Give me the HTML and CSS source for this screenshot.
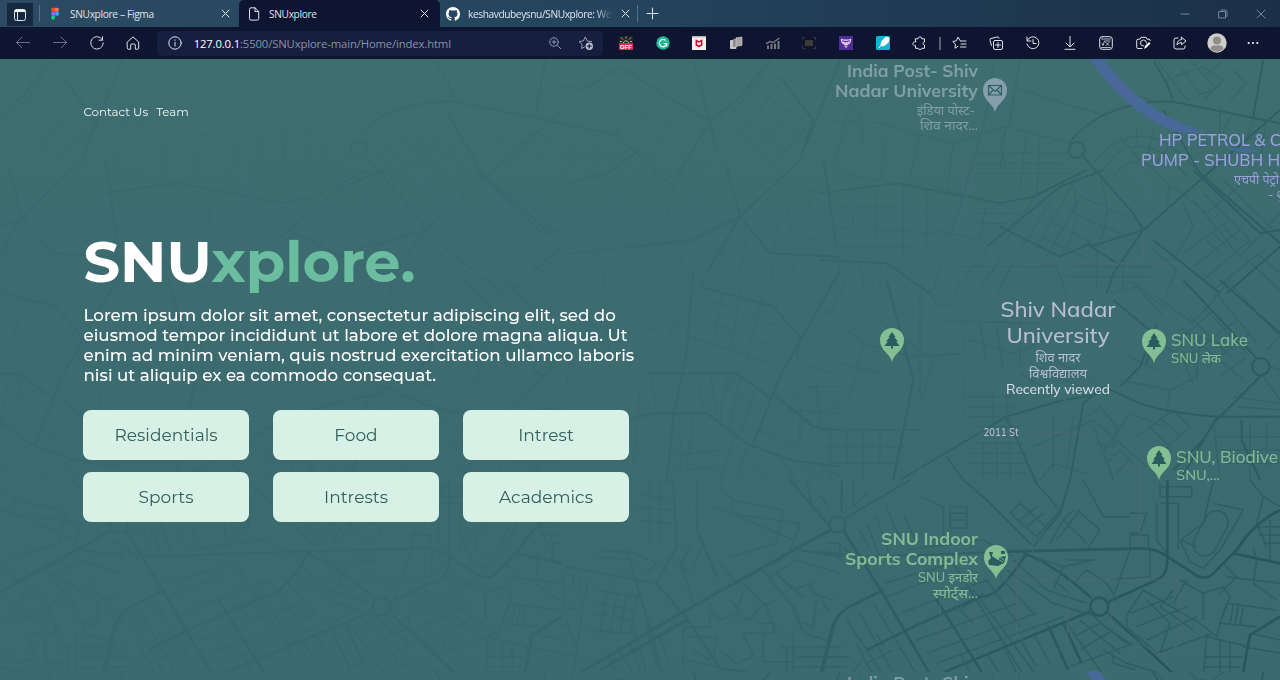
FILE: index.html
```html
<!DOCTYPE html>
<html lang="en">
<head>
<meta charset="utf-8">
<title>SNUxplore</title>
<link rel="stylesheet" href="styles.css">
</head>
<body>
<header class="browser">
  <div class="tabs">
    <div class="tab-menu"><svg width="14" height="14" viewBox="0 0 14 14"><rect x="1.500" y="1.500" width="11" height="11" rx="2" class="ln"/><path d="M1.500 4V3.500a2 2 0 0 1 2-2h7a2 2 0 0 1 2 2V4z" fill="#eef2f6"/><path d="M4.500 4v8.500" class="ln"/></svg></div>
    <i class="tab-sep"></i>
    <div class="tab tab-figma">
      <svg width="10" height="14" viewBox="0 0 10 14"><path d="M5 .8H3a2 2 0 0 0 0 4h2z" fill="#f24e1e"/><path d="M5 .8h2a2 2 0 0 1 0 4H5z" fill="#ff7262"/><path d="M5 4.800H3a2 2 0 0 0 0 4h2z" fill="#a259ff"/><circle cx="7" cy="6.800" r="2" fill="#1abcfe"/><path d="M5 8.800H3a2 2 0 1 0 2 2z" fill="#0acf83"/></svg>
      <span class="t1">SNUxplore – Figma</span>
      <svg class="x" width="9" height="9" viewBox="0 0 9 9"><path d="M1 1l7 7M8 1L1 8" class="ln"/></svg>
    </div>
    <div class="tab tab-active">
      <svg width="12" height="14" viewBox="0 0 12 14"><path d="M1.500 2.200A1.400 1.400 0 0 1 3 .8h4l3.700 3.700v7.200a1.400 1.400 0 0 1-1.400 1.400H3a1.400 1.400 0 0 1-1.500-1.400zM7 .8v3.700h3.700" class="ln"/></svg>
      <span class="t2">SNUxplore</span>
      <svg class="x" width="9" height="9" viewBox="0 0 9 9"><path d="M1 1l7 7M8 1L1 8" class="ln"/></svg>
    </div>
    <div class="tab tab-git">
      <svg width="14" height="14" viewBox="0 0 16 16"><path fill="#fff" d="M8 0C3.580 0 0 3.580 0 8c0 3.540 2.290 6.530 5.470 7.590.4.070.55-.17.55-.38 0-.19-.01-.82-.01-1.490-2.010.37-2.530-.49-2.690-.94-.09-.23-.48-.94-.82-1.130-.28-.15-.68-.52-.01-.53.63-.01 1.080.58 1.230.82.72 1.210 1.870.87 2.330.66.070-.52.28-.87.51-1.070-1.780-.2-3.640-.89-3.640-3.950 0-.87.31-1.590.82-2.150-.08-.2-.36-1.020.08-2.120 0 0 .67-.21 2.200.82.64-.18 1.320-.27 2-.27s1.360.09 2 .27c1.530-1.040 2.200-.82 2.200-.82.44 1.100.16 1.920.08 2.120.51.56.82 1.270.82 2.150 0 3.070-1.870 3.750-3.650 3.950.29.25.54.73.54 1.480 0 1.070-.01 1.930-.01 2.200 0 .21.15.46.55.38A8 8 0 0 0 16 8c0-4.420-3.580-8-8-8z"/></svg>
      <span class="t3">keshavdubeysnu/SNUxplore: Wel</span>
      <svg class="x" width="9" height="9" viewBox="0 0 9 9"><path d="M1 1l7 7M8 1L1 8" class="ln"/></svg>
    </div>
    <i class="tab-sep"></i>
    <svg class="plus" width="13" height="13" viewBox="0 0 13 13"><path d="M6.500 1v11M1 6.500h11" class="ln"/></svg>
    <div class="win">
      <svg width="10" height="10" viewBox="0 0 10 10"><path d="M1 5h8" class="ln"/></svg>
      <svg width="10" height="10" viewBox="0 0 10 10"><path d="M1 2.500h6.500V9H1zM3 1h4.500Q9 1 9 2.500V7.500" class="ln"/></svg>
      <svg width="10" height="10" viewBox="0 0 10 10"><path d="M1 1l8 8M9 1L1 9" class="ln"/></svg>
    </div>
  </div>
  <div class="bar">
    <span class="cell dim"><svg width="16" height="16" viewBox="0 0 16 16"><path d="M14.500 7.500H1.500M7 2L1.500 7.500 7 13" class="ln"/></svg></span>
    <span class="cell dim"><svg width="16" height="16" viewBox="0 0 16 16"><path d="M1.500 7.500h13M9 2l5.500 5.500L9 13" class="ln"/></svg></span>
    <span class="cell"><svg width="16" height="16" viewBox="0 0 16 16"><path d="M13.500 5A6.200 6.200 0 1 0 14.200 8M13.500 1.800v3.400h-3.400" class="ln"/></svg></span>
    <span class="cell"><svg width="16" height="16" viewBox="0 0 16 16"><path d="M2.300 7L8 1.900 13.700 7v6.200a1 1 0 0 1-1 1h-2.400V10a1 1 0 0 0-1-1H6.700a1 1 0 0 0-1 1v4.200H3.300a1 1 0 0 1-1-1z" class="ln"/></svg></span>
    <div class="address">
      <svg width="14" height="14" viewBox="0 0 14 14"><circle cx="7" cy="7" r="6.200" class="ln"/><path d="M7 6.300v3.700M7 3.900v.5" class="ln"/></svg>
      <span class="url"><b>127.0.0.1</b>:5500/SNUxplore-main/Home/index.html</span>
      <svg class="mag" width="14" height="14" viewBox="0 0 14 14"><circle cx="6" cy="6" r="4.300" class="ln"/><path d="M9.200 9.200l3.500 3.500M6 4v4M4 6h4" class="ln"/></svg>
      <svg class="fav" width="16" height="16" viewBox="0 0 16 16"><path d="M6.500 12L3.500 13.500l.7-4L1 6.500l4.300-.6L7.300 2l2 4 4.300.6" class="ln"/><circle cx="11.300" cy="11.200" r="3.700" fill="#b9bfcb"/><path d="M11.300 9v4.400M9.100 11.200h4.400" stroke="#161f40" stroke-width="1.200"/></svg>
    </div>
    <span class="cell"><svg width="14" height="14" viewBox="0 0 14 14"><path d="M0 0h14v8H0z" fill="#222329"/><path d="M7 .5v2M2 1.500l2 2M12 1.500l-2 2M1 5.500h2M11 5.500h2M4.200 7a2.900 2.900 0 0 1 5.600 0" stroke="#cfc6a0" stroke-width=".9" fill="none"/><path d="M0 7h14v7H0z" fill="#e32656"/><text x="7" y="12.700" class="off">OFF</text></svg></span>
    <span class="cell"><svg width="14" height="14" viewBox="0 0 14 14"><circle cx="7" cy="7" r="6.700" fill="#13bd91"/><path d="M9.600 4.400A3.700 3.700 0 1 0 10.700 7.600H7.800M10.700 7.300v3" stroke="#fff" stroke-width="1.200" fill="none"/></svg></span>
    <span class="cell"><svg width="14" height="14" viewBox="0 0 14 14"><rect width="14" height="14" fill="#f3efee"/><path d="M0 0h14v1.500H0z" fill="#b9b5b8"/><path d="M4.300 4.500V9L7 10.300 9.700 9V4.500L7 6z" stroke="#c8102e" stroke-width="1.500" fill="none"/></svg></span>
    <span class="cell"><svg width="14" height="14" viewBox="0 0 14 14"><rect x="1" y="4" width="6.500" height="9" rx="1" fill="#c6c6c6"/><path d="M4 3l4-.6v8L4 11z" fill="#8b8b8b"/><path d="M7 1.800l6-.8v8.500l-6 .8z" fill="#a6a6a6" stroke="#d0d0d0" stroke-width=".6"/></svg></span>
    <span class="cell"><svg width="14" height="14" viewBox="0 0 14 14"><path d="M2 9.500V13M5.500 8v5M9 7.500V13M12.500 5v8" stroke="#77797f" stroke-width="2"/><path d="M0 7.500l4-2 3 1 6.500-4.500" stroke="#77797f" stroke-width="1.500" fill="none"/></svg></span>
    <span class="cell"><svg width="14" height="14" viewBox="0 0 14 14"><path d="M3 4h8v6H3z" fill="#3c3a32"/><path d="M.5 4V1.500H3M11 1.500h2.500V4M.5 10v2.500H3M11 12.500h2.500V10" stroke="#34384a" fill="none"/></svg></span>
    <span class="cell"><svg width="14" height="14" viewBox="0 0 14 14"><rect width="14" height="14" fill="#512c97"/><path d="M2.500 3.500a4.500 5 0 0 0 9 0q-4.500 1.500-9 0zM4 6q3 2 6 0" stroke="#e4d8f4" stroke-width="1.300" fill="none"/><path d="M5 9.500h4L7 12.500z" fill="#d4a9a0"/></svg></span>
    <span class="cell"><svg width="14" height="14" viewBox="0 0 14 14"><rect width="14" height="14" rx="1.500" fill="#10b5d2"/><path d="M5 8l1-3 4-4 3 1-.5 4-4 3.500L6 10zM3 12l2.500-3.500" fill="#fff" stroke="#fff"/></svg></span>
    <span class="cell"><svg width="14" height="14" viewBox="0 0 14 14"><path d="M3.500 2.800H6a1.900 1.900 0 0 1 3.800 0h2.700V6a1.500 1.500 0 0 0 0 3v3.300H9.700a1.700 1.700 0 0 1-3.300 0H3.500V9.600a2 2 0 1 1 0-3.800z" class="ln"/></svg></span>
    <i class="bar-sep"></i>
    <span class="cell"><svg width="15" height="14" viewBox="0 0 15 14"><path d="M8 4.500L6 1 4.300 4.800.8 5.500l2.700 2.700-.5 4L6 10.300M8.500 5H14M9 8h5M8.500 11H14" class="ln"/></svg></span>
    <span class="cell"><svg width="15" height="15" viewBox="0 0 15 15"><rect x="4.500" y="4.500" width="9" height="9" rx="1.500" class="ln"/><path d="M2.500 9.500L1 4.500a1.500 1.500 0 0 1 1-2l6-1.500a1.500 1.500 0 0 1 2 1.200M9 6.500v5M6.500 9h5" class="ln"/></svg></span>
    <span class="cell"><svg width="14" height="14" viewBox="0 0 14 14"><path d="M1 1v4h4M1.300 4.500A6 6 0 1 1 1 8M7 3.500V7.500h3" class="ln"/></svg></span>
    <span class="cell"><svg width="14" height="14" viewBox="0 0 14 14"><path d="M7 .5v10M3 7l4 4 4-4M2 13.300h10" class="ln"/></svg></span>
    <span class="cell"><svg width="14" height="14" viewBox="0 0 14 14"><rect x=".7" y=".7" width="12.600" height="12.600" rx="2.500" class="ln"/><path d="M2.500 3h9M2.500 11.500h9M3 7.500l1 2L5.500 5h5.500M7 6.500l3 3M10 6.500l-3 3" class="ln thin"/></svg></span>
    <span class="cell"><svg width="15" height="14" viewBox="0 0 15 14"><path d="M6 12.500H2a1.300 1.300 0 0 1-1.300-1.300V4.500A1.300 1.300 0 0 1 2 3.200h2L5 1.300h5l1 1.900h2a1.300 1.300 0 0 1 1.300 1.300M7.500 10a3 3 0 1 1 3-3" class="ln"/><path d="M8 13l1-3 4-4 1.500 1.500-4 4z" fill="#fff"/></svg></span>
    <span class="cell"><svg width="14" height="14" viewBox="0 0 14 14"><path d="M5 2H3a2 2 0 0 0-2 2v7a2 2 0 0 0 2 2h7a2 2 0 0 0 2-2v-1M8.500 1.200L13 5 8.500 8.700V6.500Q5.500 6.500 4 9q0-5 4.500-5.500z" class="ln"/></svg></span>
    <span class="cell avatar"><svg width="20" height="20" viewBox="0 0 20 20"><circle cx="10" cy="10" r="9.700" fill="#d0cdcb"/><circle cx="10" cy="7.500" r="4" fill="#918d89"/><path d="M3.500 16Q4 12.500 7 12.500h6q3 0 3.500 3.500-6.500 5.500-13 0z" fill="#918d89"/></svg></span>
    <span class="cell"><svg width="12" height="4" viewBox="0 0 12 4"><circle cx="1.700" cy="2" r="1.100" fill="#eceff4"/><circle cx="6" cy="2" r="1.100" fill="#eceff4"/><circle cx="10.300" cy="2" r="1.100" fill="#eceff4"/></svg></span>
  </div>
</header>

<main class="page">
  <svg class="map" width="1280" height="621" viewBox="0 59 1280 621">
    <defs>
      <linearGradient id="fade" gradientUnits="userSpaceOnUse" x1="560" y1="330" x2="1180" y2="620">
        <stop offset="0" stop-color="#fff" stop-opacity=".17"/><stop offset=".4" stop-color="#fff" stop-opacity=".38"/><stop offset=".75" stop-color="#fff" stop-opacity=".72"/><stop offset="1" stop-color="#fff" stop-opacity=".92"/>
      </linearGradient>
      <mask id="m" maskUnits="userSpaceOnUse" x="0" y="59" width="1280" height="621"><rect y="59" width="1280" height="621" fill="url(#fade)"/></mask>
      <clipPath id="tileclip"><rect x="562" y="59" width="718" height="612.500"/></clipPath>
      <g id="pin"><path d="M0 17C-2 8-12 6-12-5A12 12 0 0 1 12-5C12 6 2 8 0 17z"/></g>
      <g id="tree"><use href="#pin" fill="#82bf93"/><path d="M0-13l3.500 5H2.200l3.800 4.500H4.200l3.300 4.500H1v2.500h-2V1h-6.500l3.300-4.500H-6L-2.200-8h-1.300z" fill="#285d60"/></g>
      <g id="tile" clip-path="url(#tileclip)">
        <g transform="translate(820 60) scale(.33333)">
          <path class="major" d="M1330 0L1300 170M850 165Q950 120 1060 125L1380 190M850 165Q770 210 750 250M790 290L940 460 970 510 1380 150M970 510L880 640 860 700M1030 150L1140 340 1380 550M800 330L640 410 540 430 230 370 0 400M810 560L970 510M800 550L890 610M500 560L720 380 850 330M1000 540L1200 700M540 500L720 590 810 550M1060 120L1040 70 1000 0M1120 330L1320 520 1380 510M1380 560L1220 700M0 600L200 610 330 700"/>
          <circle class="major" cx="770" cy="270" r="24"/>
          <path class="minor" d="M20 180L180 190 400 250 560 200 750 250M120 10L40 330M60 340L230 370M40 440H270M100 350V520M170 360V540M250 375V600M320 390V560M0 500L350 520M20 560H280M340 380L500 420 480 540 350 510M520 0L500 160 440 370 340 690M580 80L700 120 850 165M600 0L570 180 540 250 560 340M560 200L540 330M620 210L600 390M660 230L650 400M450 280H740M450 310H730M460 340H750M470 460H600M460 490H560M820 310Q890 220 980 230 1050 240 1130 330M850 330Q900 250 970 260 1040 270 1100 350M880 350Q920 290 980 310L1050 380 1040 430M900 230L960 300M950 200V260M1000 210L980 300M1060 240L1010 310M560 540L650 400M600 570L700 410M640 580L760 370M680 590L800 380M720 590Q790 500 760 370M840 360Q880 450 840 540M780 410L950 480M740 450L920 530M700 490L840 560M660 530L790 590M890 80L1010 130M1010 0L1100 120 1200 80M1040 60L1150 20 1210 60 1150 120M1080 20L1140 100M1110 0L1180 80M1210 0L1150 50M1240 30L1280 70 1230 120M1200 140V250M1240 150L1190 260M1300 170L1270 280M1340 180L1320 300M1380 230L1140 250M1060 380L1160 460 1290 350M1090 430L1120 500 1060 600M1120 420L1260 590 1380 460M1150 400L1300 550M1180 380L1330 530M1210 360L1360 510M1090 580L1230 480M1120 620L1260 510M1150 660L1290 540M1180 690L1330 570M1000 570L1070 630 1040 700M910 600V690M830 570V690M760 620H1000M740 650H990M700 600L740 700M1160 540L1200 580M1180 520L1220 560M1210 500L1250 540M1280 600L1380 690M1310 580L1380 640M40 120L120 160 130 260M200 210L180 370M300 220L270 350M400 250L380 400M60 610L40 700M120 600L130 690M180 610V690M500 570L400 700M540 600L470 700M580 610L530 700M420 620H700"/>
          <path class="pink" d="M510 170L430 440 350 640 330 700M430 300V690M370 610H1070M530 180L660 250 850 160M970 510V610M120 180L260 230M800 370L740 530M960 340L1000 430M650 280L560 300"/>
        </g>
        <g transform="translate(820 280) scale(.33333)">
          <path class="major" d="M1090 0L1310 235M1330 280L1180 430 1080 600M1380 160L1200 0M1380 410H1190Q1050 400 960 370L850 320M730 360L560 410 240 600M850 320L790 370 750 600M560 410L650 610M1010 130L960 260 900 320M380 530L430 600M1265 420V480L1320 600M1190 415L1150 480 1060 570M200 0L280 300 220 600M840 340L740 360M880 60L1000 160 980 250"/>
          <circle class="major" cx="1322" cy="260" r="26"/>
          <path class="minor" d="M0 80L130 190 280 230 430 220M80 0L30 100M130 190L90 350 0 400M180 120L340 240 300 370M50 250L190 280M0 450H300M30 450V600M80 450V560M130 450V600M180 450V550M0 500H260M20 550H240M300 30V350M340 20A30 30 0 1 0 400 60M430 20V430M340 120L650 130M450 180L580 220 700 170M480 130L500 250M530 140L550 270M600 120V260M430 350H580M440 380H580M450 410H560M470 440H600M520 330V440M560 320V430M600 280L700 340M630 250L780 320M660 220L820 300M460 490H610M450 520H620M450 550H620M470 580H620M490 490V600M530 490V600M570 490V600M640 500L820 420 980 560M700 400V570M760 410L740 560M820 440L880 600M790 420L840 380 890 440 880 500 830 490M900 300L1050 330 1130 290 1110 160M1130 300L1140 170 1250 210M1050 330L1040 400M1090 240L1120 310M930 230L1010 270M1020 190L1120 250M870 40L950 20 1030 110M930 0L1030 80M1010 50L1120 130 1230 0M1080 140L1270 300M1110 110L1240 240M1150 80L1280 220M1190 40L1310 190M1230 10L1380 170M1080 180L1180 90M1120 220L1250 120M1160 260L1290 160M1200 290L1280 230M1340 210L1380 170M1350 260L1380 270M1330 290L1380 360M1240 350L1380 370M1250 380L1380 390M1180 420L1200 600M1190 470H1380M1200 510H1380M1220 550H1380M1290 430V600M1340 430V560M950 470L1060 390 1110 440 1010 530M990 440L1050 500M1020 410L1080 470M840 530L930 400 1030 440M860 550L900 510 940 550M890 580L930 540M660 600L700 550 800 580"/>
          <path class="pink" d="M430 20V430H300V610M300 375H430M450 455L780 460Q870 550 960 560V610M320 0V120H650M430 270H740M880 0V40Q990 70 960 130L900 240M1000 390L960 460"/>
        </g>
        <g transform="translate(820 480) scale(.33333)">
          <path class="major2" d="M560 215L970 205Q1010 205 1050 235L1120 280Q1160 310 1190 270L1250 210Q1300 130 1380 90M1042 0V240Q1040 290 1010 300L865 365M610 220Q700 250 815 355M865 400L1080 600M810 395L400 565 320 600M620 220Q530 360 480 350L270 445 140 510M0 590L40 430Q60 390 110 370L190 330M70 150L200 360 340 600M350 360L500 600M1265 600L1290 465 1380 410M1240 220L1380 250M690 450L745 570M730 430L785 550"/>
          <circle class="major2" cx="838" cy="380" r="27"/><circle class="major" cx="52" cy="133" r="24"/>
          <path class="major" d="M75 115L270 0M0 215L140 230 560 215M65 100V0M640 200L500 60 430 0M640 200L720 100 750 0"/>
          <path class="minor2" d="M0 45L30 90M100 0V80L140 40M0 350L30 400M20 190H60V240M70 200L110 240M0 530H90M20 560H80M80 420L200 600M120 400L230 600M160 370L300 600M110 490L140 550 220 510M140 550L170 600M170 460L190 500M120 550L80 600M190 310L400 250M200 350L360 290M240 400L500 300M270 445L540 330M290 480L590 370M320 520L650 400M350 550L730 410M420 520L460 600M400 250L620 600M430 300L560 500M460 330L660 600M500 300L600 440M540 290L640 400M560 270L700 370 830 410M580 240L680 330 800 370M490 340L420 390 460 430M500 520L550 600M550 500L590 580M600 480L650 560M640 460L690 550M680 430L720 510M740 430L860 600M780 420L900 520M820 410L920 490M760 470L840 430 930 490M780 510L880 450M750 560L940 490M850 510L920 550 1020 580M880 520V550L950 570M640 230L730 260 700 330M730 260L820 240M740 240H830M760 310L800 270 860 310 880 340M700 300L750 340M930 210L880 350M990 210V290L870 300M970 330L920 405V440L1010 520 1180 460M970 330L1140 430 1190 470 1200 430M930 400L1060 350M950 440L1100 380M980 480L1130 410M1020 520L1050 430 980 360M1060 330L1020 380 1120 450M1100 300L1060 370M1080 300L1150 340V420M1150 340L1210 320 1230 350 1200 430M1130 200L1080 180M1080 180L1150 130 1180 0M1080 180L1110 245 1150 265 1200 210 1270 90 1180 70M1020 70H1075V210M1020 10V50H1115V20H1020M1010 70V180L1040 220M930 100H980L960 160H930V200M930 165H985V210M790 0L850 110H930M800 210L840 150 770 90M690 190L730 120 760 90M730 120L800 190M710 180L780 90M640 0L720 90 650 170 570 100 600 70 690 150M600 120L650 80M620 140L670 100M390 80H440V145H390zM390 100H440M390 120H440M300 50L370 80V180M250 100L290 190M200 80L240 180M170 110L210 230M140 130L180 230M120 150L150 210M260 210L490 180 580 230M1290 0L1330 50 1310 130M1330 50L1380 80M1310 130L1340 200M1310 140H1380M1315 165H1380M1330 190H1380M1300 205L1310 240M1350 120V240M1220 290L1380 310M1210 250L1250 290 1200 340M1310 240L1300 310 1370 360M1220 370L1370 390M1220 370L1200 430 1310 440M1240 375L1230 430M1255 375L1245 430M1270 380L1260 435M1160 470L1290 500M1160 460L1150 600M1200 480V590M1230 490V590M1155 530H1270M1155 560H1260M1290 460L1380 480M1270 500L1380 520"/>
          <rect class="minor2" x="1137" y="88" width="70" height="144" rx="35" transform="rotate(28 1172 160)"/>
          <path class="pink" d="M300 0V130M590 220V470Q700 530 740 500L750 300H1070L1085 400V470Q1060 530 1010 520L870 430 880 360M960 0V180M360 270V470H460L470 380M540 300H700L630 200 690 150"/>
        </g>
        <g transform="translate(400 480) scale(.33333)">
          <path class="major2" d="M530 585L850 395 1290 150M600 570L860 420M1265 585L1300 440 1320 400"/>
          <path class="major" d="M680 210L790 585M850 400L960 565 1040 575M500 260L770 310 840 390M770 310L830 200 820 0M890 0V150L950 290M1200 210L1320 230M1290 140L1170 0"/>
          <path class="minor2" d="M1080 260L1180 380 1210 460 1280 480M1030 310L1100 380 1130 460M1140 290L1210 350M1110 290L1190 240 1320 280M1130 280L1180 330 1230 310 1240 340 1300 360M1250 360L1240 440 1190 420M1080 430H1120V460H1030L1060 530 1010 550 960 510M1090 460V545H1180M1140 500H1320M1190 530H1320M1180 560H1320M1160 500V580M1180 460V580M930 390L960 420 1010 400 1050 420 1080 380 1130 360M990 360L1030 400M1030 330L1010 400M930 370V440H850V580M950 470H860M950 470L940 540M700 450L740 580M740 440L780 580M780 470L810 560M650 500L700 580M690 490L720 570M620 520L650 580M880 510L930 540M860 540L950 560M590 330L710 350 690 460 570 450M620 340L600 460M650 345L630 460M680 350L660 460M590 370L700 390M580 400L695 420M490 280V380L540 390M520 280V330M540 290V340M560 300V350M590 230L700 240M600 210L710 220M710 220L770 250 740 280M840 240L880 370M870 200L840 260 870 270M900 210L880 260M940 80L1020 110 1180 180M960 20L1000 60 1150 90 1130 190 990 230M1000 60L990 100 1200 130 1170 210M1220 0L1240 100M1170 220L1010 310 960 250M720 40L800 60M710 80L810 90M720 120L810 130M750 0V180M780 0V190M400 460L500 430 530 500M290 490L530 530M280 500L260 580M370 580L400 460M550 370L520 580"/>
        </g>
        <g transform="translate(540 60) scale(.33333)">
          <path class="major" d="M240 20Q330 80 510 185L530 280M460 0L510 185 410 350M0 180L230 225 400 380M510 185L600 110 690 0M720 50L820 180 780 300 600 470 500 640M780 300L900 0M560 320L600 470 690 580 900 590M850 300L890 560M600 470L460 540 0 590M0 390L200 340 300 270M0 60L130 90 240 20"/>
          <path class="minor" d="M50 0L220 130 510 250M100 0L60 180M150 80L100 210M220 120L160 210M290 80L230 220M350 100L280 260M410 130L330 300M540 170L690 290M570 140L740 270M600 110L800 240M630 80L840 210M680 30L560 190M730 60L600 220M780 120L650 260M820 180L700 310M0 270L250 300 190 420M40 190L0 340M110 205L70 380M180 215L140 400M270 260L180 350M320 310L230 420M380 380L480 330M340 340L520 300M200 400L360 500 560 390M260 370L200 530M330 350L280 560M400 380L350 600M470 380L420 620M40 440L180 400 270 560M80 400L20 560M120 440L60 590M640 470L760 380 900 410M660 510L740 450 760 540M720 460L700 570M790 350L730 490M830 380L760 550 880 520M0 490L180 560 160 640M560 540L530 640M620 530L600 640M700 600V640M760 600V640M820 600V640"/>
        </g>
        <g transform="translate(540 270) scale(.33333)">
          <path class="major" d="M900 0L720 320 640 520M460 0L440 250 400 440 380 640M480 50L700 110 780 200M340 430L500 430 620 520 750 570 900 590M710 380L820 470 900 480M330 310L590 310 700 390M66 500L340 430"/>
          <path class="minor" d="M500 0L480 50M560 10L530 70M620 20L590 90M700 0L660 110M760 30L700 120M480 80L720 170M460 130L700 230M450 200L690 280M550 70L520 210M600 90L570 240M660 100L620 270M780 190L770 280 880 310M760 390L810 350H900M740 420L900 430M780 400V520M830 340L840 470M470 300L490 420M510 310L530 430M560 310L540 450M600 320L570 470M650 350L600 490M590 310L560 360 650 400M330 300L350 420M300 350L280 600M420 440V630M460 440L440 600M380 560L540 540M400 600L560 590M580 520L540 640M620 530L590 640M680 520L720 450M650 480L800 540M620 580L690 640M720 560L770 640M780 570L850 640M830 580L900 620M350 260L440 100M70 60L240 90 380 20M90 160L280 190 420 160M120 0L80 350M190 0L210 300"/>
        </g>
      </g>
    </defs>
    <g mask="url(#m)">
      <use href="#tile"/><use href="#tile" x="-718"/><use href="#tile" y="612"/><use href="#tile" x="-718" y="612"/>
    </g>
    <path d="M1086 55C1110 88 1140 120 1180 133L1206 132C1158 118 1126 90 1104 59z" class="river"/>
    <path d="M1226 149q16-3 34 2l-14 2z" class="river"/>
    <path d="M1085 671h14l8 10h-14z" class="river"/>

    <g class="lab grey b" text-anchor="end">
      <text x="978" y="77" textLength="131" lengthAdjust="spacingAndGlyphs" font-size="17">India Post- Shiv</text>
      <text x="978" y="97" textLength="143" lengthAdjust="spacingAndGlyphs" font-size="17">Nadar University</text>
    </g>
    <g class="lab hi grey" text-anchor="end"><text x="975" y="115" textLength="58" lengthAdjust="spacingAndGlyphs">इंडिया पोस्ट-</text><text x="978" y="130" textLength="58" lengthAdjust="spacingAndGlyphs">शिव नादर…</text></g>
    <use href="#pin" x="995" y="95" fill="#849fab"/><path d="M988.500 85.500h13v9.500h-13zM988.500 85.500l6.500 6 6.500-6M988.500 95l4.500-5M1001.500 95l-4.500-5" fill="none" stroke="#2d6064" stroke-width="1.200"/>
    <g class="lab violet" font-size="17">
      <text x="1159" y="146" textLength="122" lengthAdjust="spacingAndGlyphs">HP PETROL &amp; C</text>
      <text x="1141" y="166" textLength="139" lengthAdjust="spacingAndGlyphs">PUMP - SHUBH H</text>
      <text x="1234" y="184" class="hi">एचपी पेट्रो</text><text x="1268" y="199" class="hi">- शु</text>
    </g>
    <g class="lab pale" text-anchor="middle">
      <text x="1058" y="317" font-size="21.500" textLength="115" lengthAdjust="spacingAndGlyphs">Shiv Nadar</text>
      <text x="1058" y="343" font-size="21.500" textLength="103" lengthAdjust="spacingAndGlyphs">University</text>
      <text x="1058" y="362" class="hi" textLength="45" lengthAdjust="spacingAndGlyphs">शिव नादर</text>
      <text x="1058" y="378" class="hi" textLength="58" lengthAdjust="spacingAndGlyphs">विश्वविद्यालय</text>
      <text x="1058" y="394" font-size="13" textLength="104" lengthAdjust="spacingAndGlyphs" class="recent">Recently viewed</text>
      <text x="1001" y="435.500" font-size="11" textLength="35" lengthAdjust="spacingAndGlyphs">2011 St</text>
    </g>
    <use href="#tree" x="892" y="345"/><use href="#tree" x="1154" y="346"/><use href="#tree" x="1159" y="463"/>
    <g class="lab green">
      <text x="1171" y="346" font-size="17" textLength="77" lengthAdjust="spacingAndGlyphs">SNU Lake</text>
      <text x="1171" y="363" font-size="12.500" textLength="50" lengthAdjust="spacingAndGlyphs">SNU लेक</text>
      <text x="1176" y="463" font-size="17" textLength="102" lengthAdjust="spacingAndGlyphs">SNU, Biodive</text>
      <text x="1176" y="480" font-size="13" textLength="44" lengthAdjust="spacingAndGlyphs">SNU,…</text>
    </g>
    <g class="lab green" text-anchor="end">
      <text x="978" y="545" class="b" font-size="17" textLength="97" lengthAdjust="spacingAndGlyphs">SNU Indoor</text>
      <text x="978" y="565" class="b" font-size="17" textLength="133" lengthAdjust="spacingAndGlyphs">Sports Complex</text>
      <text x="978" y="582" font-size="12.500" textLength="60" lengthAdjust="spacingAndGlyphs">SNU इनडोर</text>
      <text x="978" y="598" font-size="12.500" textLength="45" lengthAdjust="spacingAndGlyphs">स्पोर्ट्स…</text>
    </g>
    <use href="#pin" x="996" y="562" fill="#82bf93"/><path d="M989 552h4l-1 4 6 4 2-3 6-1-2 7-6 3-9-1-1-4 3-3zM1001 551h4v3h-4z" fill="#285d60"/>
    <path d="M998 556l6 4M996 558l7 4" stroke="#82bf93" stroke-width=".8"/>
    <text class="lab grey b" x="847" y="689" font-size="17" textLength="131" lengthAdjust="spacingAndGlyphs">India Post- Shiv</text>
  </svg>

  <div class="content">
    <nav><a>Contact Us</a><a>Team</a></nav>
    <h1>SNU<span class="xplore">xplore.</span></h1>
    <p>Lorem ipsum dolor sit amet, consectetur adipiscing elit, sed do<br>eiusmod tempor incididunt ut labore et dolore magna aliqua. Ut<br>enim ad minim veniam, quis nostrud exercitation ullamco laboris<br>nisi ut aliquip ex ea commodo consequat.</p>
    <div class="grid">
      <button>Residentials</button><button>Food</button><button>Intrest</button>
      <button>Sports</button><button>Intrests</button><button>Academics</button>
    </div>
  </div>
</main>
</body>
</html>
```

FILE: styles.css
```css
* { box-sizing: border-box; }
body { margin: 0; width: 1280px; height: 680px; overflow: hidden; font-family: Montserrat, Inter, sans-serif; background: #3d6c70; }
svg { display: block; flex: none; }
.ln { fill: none; stroke: currentColor; stroke-width: 1; stroke-linecap: round; stroke-linejoin: round; }
.thin { stroke-width: .8; }

.browser { height: 59px; color: #dfe4ec; font-family: "Segoe UI", "Open Sans", sans-serif; }
.tabs { height: 27px; display: flex; align-items: center; background: linear-gradient(90deg, #2c4b63, #24435d 50%, #1a3047); }
.tab-menu { width: 26px; height: 23px; margin: 2px 6px 0 7px; display: flex; align-items: center; justify-content: center; background: #16293f; }
.tab-sep { width: 1px; height: 17px; background: #58708a; }
.tab { height: 27px; display: flex; align-items: center; font-size: 10.2px; letter-spacing: -.35px; white-space: nowrap; }
.tab .x { margin-left: auto; }
.tab-figma { width: 199px; padding: 0 9px 0 10px; gap: 10px; }
.tab-active { width: 201px; padding: 0 11px 0 9px; gap: 9px; background: #0e1531; border-radius: 5px 5px 0 0; }
.tab-git { width: 197px; padding: 0 9px 0 6px; gap: 8px; }
.t3 { letter-spacing: -.42px; -webkit-mask-image: linear-gradient(90deg, #000 88%, transparent); mask-image: linear-gradient(90deg, #000 88%, transparent); }
.plus { margin-left: 8px; }
.win { display: flex; gap: 28px; margin-left: auto; padding-right: 14px; color: #74859a; }

.bar { height: 32px; padding: 0 0 0 5px; display: flex; align-items: center; background: #0e1531; }
.cell { width: 36.67px; flex: none; display: flex; justify-content: center; }
.dim { color: #66708a; }
.off { font: bold 6px "Liberation Sans", sans-serif; fill: #fff; text-anchor: middle; }
.address { width: 446px; height: 25px; margin: 0 5px; padding: 0 9px 0 11px; display: flex; align-items: center; background: #161f40; border-radius: 4px; }
.url { margin-left: 12px; font-size: 11.3px; letter-spacing: -.14px; color: #8a92a5; white-space: nowrap; }
.url b { font-weight: 400; color: #fff; }
.mag { margin-left: auto; color: #8f97a9; }
.fav { margin-left: 16px; color: #9ba3b3; }
.bar-sep { width: 2px; height: 13px; margin: 0 1px; background: #596074; }
.avatar { padding-left: 2px; }

.page { position: relative; height: 621px; background: linear-gradient(#3f6e70, #3c6b70 45%, #3b6a6f); }
.map { position: absolute; inset: 0; overflow: hidden; }
.major { fill: none; stroke: #2c5b5f; stroke-width: 6; }
.major2 { fill: none; stroke: #27565a; stroke-width: 8; }
.minor { fill: none; stroke: #315f63; stroke-width: 4; opacity: .75; }
.minor2 { fill: none; stroke: #2b5a5d; stroke-width: 4.5; opacity: .8; }
.pink { fill: none; stroke: #596981; stroke-width: 5; opacity: .45; }
.river { fill: #486899; }
.lab { font-family: Mulish, Inter, "Noto Sans Devanagari", sans-serif; font-weight: 500; }
.hi { font-size: 12.5px; font-weight: 400; }
.b { font-weight: 700; }
.grey { fill: #809ea7; }
.violet { fill: #9a9fe0; }
.pale { fill: #b8bfd0; }
.recent { fill: #d3dde2; }
.green { fill: #82bb93; }

.content { position: relative; padding: 46px 0 0 83.5px; color: #fff; }
nav { display: flex; gap: 8px; height: 14px; font-size: 11.8px; line-height: 14px; color: #eef5f4; }
h1 { margin: 107px 0 0; height: 71px; font-size: 57.4px; line-height: 71px; font-weight: 700; white-space: nowrap; }
.xplore { color: #6bbd9f; }
p { margin: 8px 0 0; font-size: 16.7px; line-height: 20px; font-weight: 500; white-space: nowrap; }
.grid { display: grid; grid-template-columns: repeat(3, 166px); gap: 12px 24px; margin: 25px 0 0 -.5px; }
button { height: 50px; padding: 0; border: 0; border-radius: 8px; background: #d8f1e6; color: #315f5b; font: 400 17px Montserrat, Inter, sans-serif; }
```
